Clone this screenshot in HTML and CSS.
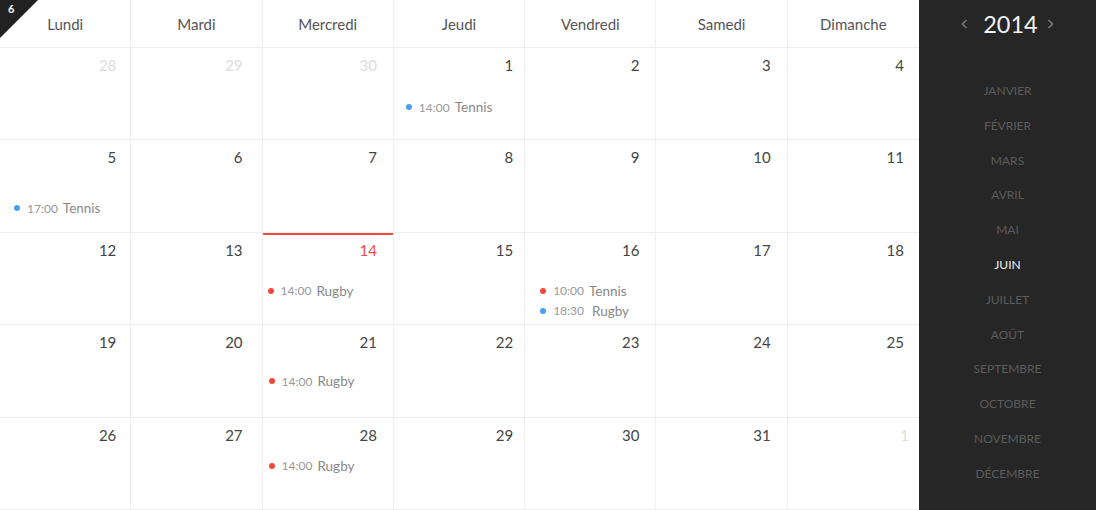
FILE: index.html
```html
<!DOCTYPE html>
<html lang="fr">
<head>
<meta charset="utf-8">
<title>Calendrier</title>
<link rel="stylesheet" href="styles.css">
</head>
<body>
<div class="app">
  <div class="calendar">
    <div class="week-badge"><span class="week-num">6</span></div>
    <div class="head">Lundi</div>
    <div class="head">Mardi</div>
    <div class="head">Mercredi</div>
    <div class="head">Jeudi</div>
    <div class="head">Vendredi</div>
    <div class="head">Samedi</div>
    <div class="head">Dimanche</div>

    <div class="cell"><div class="num muted">28</div></div>
    <div class="cell"><div class="num muted">29</div></div>
    <div class="cell"><div class="num muted">30</div></div>
    <div class="cell"><div class="num">1</div>
      <ul class="events r1 in12"><li class="ev"><span class="dot blue"></span><span class="time">14:00</span><span class="title">Tennis</span></li></ul></div>
    <div class="cell"><div class="num">2</div></div>
    <div class="cell"><div class="num">3</div></div>
    <div class="cell"><div class="num">4</div></div>

    <div class="cell"><div class="num">5</div>
      <ul class="events r2 in14"><li class="ev"><span class="dot blue"></span><span class="time">17:00</span><span class="title">Tennis</span></li></ul></div>
    <div class="cell"><div class="num">6</div></div>
    <div class="cell"><div class="num">7</div></div>
    <div class="cell"><div class="num">8</div></div>
    <div class="cell"><div class="num">9</div></div>
    <div class="cell"><div class="num">10</div></div>
    <div class="cell"><div class="num">11</div></div>

    <div class="cell"><div class="num">12</div></div>
    <div class="cell"><div class="num">13</div></div>
    <div class="cell today"><div class="num">14</div>
      <ul class="events r3 in5"><li class="ev"><span class="dot red"></span><span class="time">14:00</span><span class="title">Rugby</span></li></ul></div>
    <div class="cell"><div class="num">15</div></div>
    <div class="cell"><div class="num">16</div>
      <ul class="events r3 in15">
        <li class="ev"><span class="dot red"></span><span class="time">10:00</span><span class="title">Tennis</span></li>
        <li class="ev"><span class="dot blue"></span><span class="time">18:30</span><span class="title wide">Rugby</span></li>
      </ul></div>
    <div class="cell"><div class="num">17</div></div>
    <div class="cell"><div class="num">18</div></div>

    <div class="cell"><div class="num">19</div></div>
    <div class="cell"><div class="num">20</div></div>
    <div class="cell"><div class="num">21</div>
      <ul class="events r4 in6"><li class="ev"><span class="dot red"></span><span class="time">14:00</span><span class="title">Rugby</span></li></ul></div>
    <div class="cell"><div class="num">22</div></div>
    <div class="cell"><div class="num">23</div></div>
    <div class="cell"><div class="num">24</div></div>
    <div class="cell"><div class="num">25</div></div>

    <div class="cell"><div class="num">26</div></div>
    <div class="cell"><div class="num">27</div></div>
    <div class="cell"><div class="num">28</div>
      <ul class="events r5 in6"><li class="ev"><span class="dot red"></span><span class="time">14:00</span><span class="title">Rugby</span></li></ul></div>
    <div class="cell"><div class="num">29</div></div>
    <div class="cell"><div class="num">30</div></div>
    <div class="cell"><div class="num">31</div></div>
    <div class="cell"><div class="num muted next-month">1</div></div>
  </div>

  <aside class="sidebar">
    <div class="year-nav">
      <svg class="chev prev" width="7" height="10" viewBox="0 0 7 10"><path d="M5.5 1 L1.5 5 L5.5 9" fill="none" stroke="currentColor" stroke-width="1.6"/></svg>
      <span class="year">2014</span>
      <svg class="chev next" width="7" height="10" viewBox="0 0 7 10"><path d="M1.5 1 L5.5 5 L1.5 9" fill="none" stroke="currentColor" stroke-width="1.6"/></svg>
    </div>
    <ul class="months">
      <li>Janvier</li>
      <li>Février</li>
      <li>Mars</li>
      <li>Avril</li>
      <li>Mai</li>
      <li class="active">Juin</li>
      <li>Juillet</li>
      <li>Août</li>
      <li>Septembre</li>
      <li>Octobre</li>
      <li>Novembre</li>
      <li>Décembre</li>
    </ul>
  </aside>
</div>
</body>
</html>
```

FILE: styles.css
```css
* { box-sizing: border-box; }
html, body {
  margin: 0;
  padding: 0;
  height: 100%;
  background: #fff;
  font-family: Lato, "Open Sans", "Liberation Sans", sans-serif;
}
.app {
  display: flex;
  width: 1096px;
  height: 510px;
  overflow: hidden;
}
.calendar {
  position: relative;
  width: 919px;
  display: grid;
  grid-template-columns: repeat(7, 1fr);
  grid-template-rows: 48px repeat(5, 1fr);
}
.week-badge {
  position: absolute;
  left: 0;
  top: 0;
  width: 0;
  height: 0;
  border-top: 38px solid #222;
  border-right: 38px solid transparent;
  z-index: 2;
}
.week-num {
  position: absolute;
  left: 8px;
  top: -36px;
  color: #fff;
  font-size: 11px;
  font-weight: bold;
  line-height: 14px;
}
.head {
  display: flex;
  align-items: center;
  justify-content: center;
  color: #555;
  font-size: 15px;
  border-right: 1px solid #efefef;
  border-bottom: 1px solid #efefef;
}
.cell {
  border-right: 1px solid #efefef;
  border-bottom: 1px solid #efefef;
  padding: 7px 0 0 0;
  min-width: 0;
}
.head:nth-child(8), .cell:nth-child(7n+8) { border-right: 0; }
.num {
  text-align: right;
  padding-right: 14px;
  font-size: 15px;
  line-height: 20px;
  color: #444;
}
.cell:nth-child(7n+2) .num { padding-right: 14px; }
.cell:nth-child(7n+3) .num { padding-right: 19px; }
.cell:nth-child(7n+4) .num { padding-right: 16px; }
.cell:nth-child(7n+5) .num { padding-right: 11px; }
.cell:nth-child(7n+6) .num { padding-right: 16px; }
.cell:nth-child(7n+7) .num { padding-right: 16px; }
.cell:nth-child(7n+8) .num { padding-right: 15px; }
.num.muted { color: #dcdcdc; }
.cell .num.next-month { padding-right: 10px; }
.today { box-shadow: inset 0 2px 0 #f4483c; }
.today .num { color: #f4483c; }
.events {
  list-style: none;
  margin: 0;
  padding: 0 0 0 12px;
}
.events.r1 { margin-top: 22px; }
.events.r2 { margin-top: 31px; }
.events.r3 { margin-top: 21px; }
.events.r4 { margin-top: 19px; }
.events.r5 { margin-top: 11px; }
.events.in5 { padding-left: 5px; }
.events.in6 { padding-left: 6px; }
.events.in12 { padding-left: 12px; }
.events.in14 { padding-left: 14px; }
.events.in15 { padding-left: 15px; }
.ev {
  display: flex;
  align-items: center;
  height: 20px;
  white-space: nowrap;
}
.dot {
  width: 6px;
  height: 6px;
  border-radius: 50%;
  margin-right: 7px;
  flex: none;
}
.dot.blue { background: #4aa0f0; }
.dot.red { background: #f4483c; }
.time {
  font-size: 12px;
  color: #999;
  margin-right: 5px;
}
.title {
  font-size: 13.5px;
  color: #888;
}
.title.wide { margin-left: 3px; }
.sidebar {
  width: 177px;
  background: #262626;
  display: flex;
  flex-direction: column;
}
.year-nav {
  height: 48px;
  display: flex;
  align-items: center;
  justify-content: center;
}
.chev { color: #7a7a7a; display: block; }
.chev.prev { margin-right: 15px; }
.chev.next { margin-left: 9px; }
.year {
  color: #f2f2f2;
  font-size: 23.5px;
  line-height: 30px;
}
.months {
  list-style: none;
  margin: 0;
  padding: 26px 0 0 0;
}
.months li {
  height: 34.8px;
  line-height: 34.8px;
  text-align: center;
  text-transform: uppercase;
  font-size: 12px;
  color: #5c5c5c;
}
.months li.active { color: #f2f2f2; }
```
